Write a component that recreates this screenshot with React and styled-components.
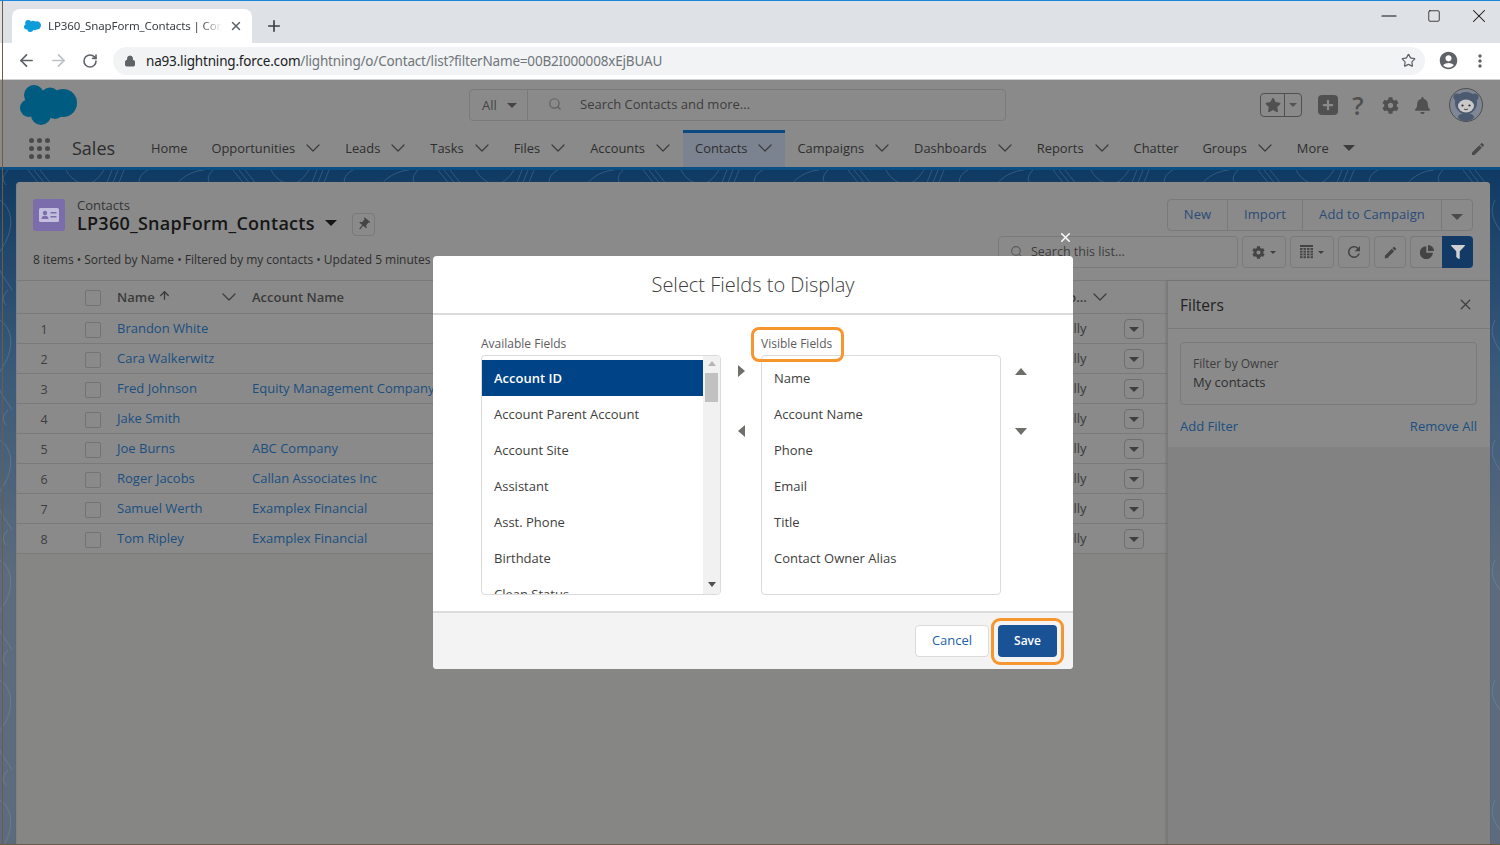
import React from "react";
import styled, { createGlobalStyle } from "styled-components";
import {
  ArrowLeft, ArrowRight, RotateCw, Star, Plus, X, Lock, Search, ChevronDown,
  ArrowUp, Minus, Square,
} from "lucide-react";
import { MdAccountCircle, MdMoreVert, MdPushPin, MdEdit, MdRefresh } from "react-icons/md";
import { FaBell, FaCog, FaFilter, FaStar, FaPlus } from "react-icons/fa";

const UI = `"Open Sans", "Noto Sans", sans-serif`;
const CHROME = `"Noto Sans", "Open Sans", sans-serif`;

const NAV = [
  { label: "Home" },
  { label: "Opportunities", menu: true },
  { label: "Leads", menu: true },
  { label: "Tasks", menu: true },
  { label: "Files", menu: true },
  { label: "Accounts", menu: true },
  { label: "Contacts", menu: true, active: true },
  { label: "Campaigns", menu: true },
  { label: "Dashboards", menu: true },
  { label: "Reports", menu: true },
  { label: "Chatter" },
  { label: "Groups", menu: true },
];

const ROWS = [
  ["Brandon White", ""],
  ["Cara Walkerwitz", ""],
  ["Fred Johnson", "Equity Management Company"],
  ["Jake Smith", ""],
  ["Joe Burns", "ABC Company"],
  ["Roger Jacobs", "Callan Associates Inc"],
  ["Samuel Werth", "Examplex Financial"],
  ["Tom Ripley", "Examplex Financial"],
];

const AVAILABLE = ["Account ID", "Account Parent Account", "Account Site", "Assistant", "Asst. Phone", "Birthdate", "Clean Status"];
const VISIBLE = ["Name", "Account Name", "Phone", "Email", "Title", "Contact Owner Alias"];

function Cloud({ width, color }) {
  return (
    <svg width={width} viewBox="0 0 57 40" fill={color} style={{ display: "block" }}>
      <circle cx="14" cy="10" r="10" />
      <circle cx="30" cy="12" r="9.5" />
      <circle cx="43" cy="18" r="14" />
      <circle cx="9" cy="23" r="9" />
      <circle cx="21" cy="30" r="10" />
      <circle cx="35" cy="25" r="9" />
      <rect x="10" y="10" width="30" height="20" />
    </svg>
  );
}

function Astro() {
  return (
    <svg width="34" height="34" viewBox="0 0 34 34" style={{ marginLeft: 5 }}>
      <circle cx="17" cy="17" r="16.5" fill="#7e8793" stroke="#4f4f4f" />
      <circle cx="8" cy="9" r="3.5" fill="#4b5a70" />
      <circle cx="26" cy="9" r="3.5" fill="#4b5a70" />
      <circle cx="17" cy="15" r="11" fill="#4b5a70" />
      <ellipse cx="17" cy="29" rx="8" ry="4" fill="#4b5a70" />
      <ellipse cx="17" cy="18" rx="8" ry="6.5" fill="#c9c9c9" />
      <circle cx="13.5" cy="17.5" r="1.1" fill="#2a2a2a" />
      <circle cx="20.5" cy="17.5" r="1.1" fill="#2a2a2a" />
      <path d="M15 21q2 1.5 4 0" stroke="#2a2a2a" fill="none" strokeWidth="0.8" />
    </svg>
  );
}

function ContactCard() {
  return (
    <svg width="20" height="14" viewBox="0 0 20 14">
      <rect width="20" height="14" rx="1.5" fill="#c3bedd" />
      <circle cx="6" cy="5" r="2.2" fill="#7b6cab" />
      <path d="M2.5 11c0-2.4 1.500-3.200 3.500-3.200s3.500.8 3.500 3.200z" fill="#7b6cab" />
      <rect x="11.500" y="4" width="6" height="1.500" fill="#7b6cab" />
      <rect x="11.500" y="8" width="6" height="1.500" fill="#7b6cab" />
    </svg>
  );
}

function GridIcon() {
  return (
    <svg width="13" height="14" viewBox="0 0 13 14" fill="#444">
      <rect width="13" height="2" />
      {[3, 5.75, 8.5, 11.25].map((y) => [0, 3.5, 7, 10.5].map((x) => (
        <rect key={`${x}-${y}`} x={x} y={y} width="2.5" height="1.9" />
      )))}
    </svg>
  );
}

function PieIcon() {
  return (
    <svg width="14" height="14" viewBox="0 0 14 14" fill="#444">
      <path d="M6.300 1.200v6.500h6.500a6.500 6.500 0 1 1-6.500-6.500z" />
      <path d="M8 0a6 6 0 0 1 6 6H8z" />
    </svg>
  );
}

function Topo() {
  return (
    <BandArt width="100%" height="100%">
      <defs>
        <pattern id="topo" width="205" height="120" patternUnits="userSpaceOnUse">
          <g fill="none" stroke="#7fa6c6" strokeOpacity="0.28" strokeWidth="1">
            <path d="M8 0c-6 6-6 10-2 15M28 0l12 15M34 0l12 15M40 0l12 15M66 0c4 8 12 14 20 14s14-8 18-14M112 0l-6 15M118 0l-6 15M124 0l-6 15M148 0c-8 4-10 10-8 15M176 15c6-8 16-14 28-15" />
            <path d="M0 30c14 10 14 30 2 48s4 30 10 42M30 20c-12 20-2 44 2 60s-8 30-6 40M150 30c30 10 40 30 30 50s-20 30-8 40M90 30c20 8 40 4 50 24s-10 40 0 66M60 30c-10 20 10 30 14 50s-6 30 0 40" />
          </g>
        </pattern>
      </defs>
      <rect width="100%" height="100%" fill="url(#topo)" />
    </BandArt>
  );
}

export default function App() {
  return (
    <Frame>
      <GlobalStyle />
      <TabBar>
        <Tab>
          <Cloud width={17} color="#0d9dda" />
          <TabTitle>LP360_SnapForm_Contacts | Contacts | Salesforce</TabTitle>
          <X size={14} color="#5f6368" strokeWidth={2.5} />
        </Tab>
        <NewTab><Plus size={18} color="#3c4043" strokeWidth={2.2} /></NewTab>
        <WindowControls>
          <WindowButton><Minus size={24} strokeWidth={1.1} /></WindowButton>
          <WindowButton><Square size={14} strokeWidth={1.3} /></WindowButton>
          <WindowButton><X size={22} strokeWidth={1.1} /></WindowButton>
        </WindowControls>
      </TabBar>

      <Toolbar>
        <ToolIcon><ArrowLeft size={19} color="#5f6368" strokeWidth={2.2} /></ToolIcon>
        <ToolIcon><ArrowRight size={19} color="#bdc1c6" strokeWidth={2.2} /></ToolIcon>
        <ToolIcon><RotateCw size={16} color="#5f6368" strokeWidth={2.4} /></ToolIcon>
        <AddressBar>
          <Lock size={12} color="#5f6368" fill="#5f6368" />
          <Url><b>na93.lightning.force.com</b>/lightning/o/Contact/list?filterName=00B2I000008xEjBUAU</Url>
          <Star size={15} color="#5f6368" strokeWidth={2} />
        </AddressBar>
        <Account><MdAccountCircle size={21} color="#5f6368" /></Account>
        <Account><MdMoreVert size={20} color="#5f6368" /></Account>
      </Toolbar>

      <GlobalHeader>
        <LogoSlot><Cloud width={57} color="#005b80" /></LogoSlot>
        <SearchBox>
          <ScopePicker>All<Caret $size={5} /></ScopePicker>
          <SearchField>
            <Search size={14} color="#5f5f5f" />
            <span>Search Contacts and more...</span>
          </SearchField>
        </SearchBox>
        <HeaderTools>
          <Favorites>
            <FavStar><FaStar size={16} /></FavStar>
            <FavMenu><Caret $size={4} $color="#555" /></FavMenu>
          </Favorites>
          <PlusTile><FaPlus size={12} color="#8a8a8a" /></PlusTile>
          <HeaderIcon><Question>?</Question></HeaderIcon>
          <HeaderIcon><FaCog size={17} /></HeaderIcon>
          <HeaderIcon><FaBell size={17} /></HeaderIcon>
          <Astro />
        </HeaderTools>
      </GlobalHeader>

      <NavBar>
        <Waffle>{Array.from({ length: 9 }).map((_, i) => <i key={i} />)}</Waffle>
        <AppName>Sales</AppName>
        {NAV.map((item) => (
          <NavItem key={item.label} $active={item.active}>
            {item.label}
            {item.menu && <Chevron />}
          </NavItem>
        ))}
        <NavItem>More<Caret $size={6} $color="#3c3c3c" $gap={4} /></NavItem>
        <NavEdit><MdEdit size={16} /></NavEdit>
      </NavBar>

      <Band>
        <Topo />
        <Card>
          <ListHeader>
            <ListTitle>
              <TitleRow>
                <ObjectIcon><ContactCard /></ObjectIcon>
                <div>
                  <ObjectName>Contacts</ObjectName>
                  <ViewName>
                    LP360_SnapForm_Contacts
                    <Caret $size={6} $color="#161616" $gap={10} />
                    <PinButton><MdPushPin size={15} /></PinButton>
                  </ViewName>
                </div>
              </TitleRow>
              <Meta>8 items • Sorted by Name • Filtered by my contacts • Updated 5 minutes ago</Meta>
            </ListTitle>
            <ListActions>
              <ButtonGroup>
                <GroupButton $width={59}>New</GroupButton>
                <GroupButton $width={75}>Import</GroupButton>
                <GroupButton $width={139}>Add to Campaign</GroupButton>
                <GroupButton $width={31}><Caret $size={6} $color="#4a4a4a" /></GroupButton>
              </ButtonGroup>
              <ListTools>
                <ListSearch>
                  <Search size={13} color="#5a5a5a" />
                  <span>Search this list...</span>
                </ListSearch>
                <ToolButton $wide><FaCog size={13} /><Caret $size={3} $color="#3f3f3f" /></ToolButton>
                <ToolButton $wide><GridIcon /><Caret $size={3} $color="#3f3f3f" /></ToolButton>
                <ToolButton><MdRefresh size={18} /></ToolButton>
                <ToolButton><MdEdit size={15} /></ToolButton>
                <ChartFilter>
                  <ToolButton $joined><PieIcon /></ToolButton>
                  <FilterButton><FaFilter size={14} color="#d0d0d0" /></FilterButton>
                </ChartFilter>
              </ListTools>
            </ListActions>
          </ListHeader>

          <ListBody>
            <Table>
              <HeadRow>
                <span />
                <CheckCell><Checkbox /></CheckCell>
                <HeadCell>
                  <span>Name <ArrowUp size={13} strokeWidth={2.4} /></span>
                  <Chevron />
                </HeadCell>
                <HeadLabel>Account Name</HeadLabel>
                <AliasHead>Co...<Chevron /></AliasHead>
                <span />
              </HeadRow>
              {ROWS.map(([name, account], i) => (
                <Row key={name}>
                  <RowNumber>{i + 1}</RowNumber>
                  <CheckCell><Checkbox /></CheckCell>
                  <RowLink>{name}</RowLink>
                  <RowLink>{account}</RowLink>
                  <Alias>sally</Alias>
                  <RowMenu><Caret $size={5} $color="#3f3f3f" /></RowMenu>
                </Row>
              ))}
            </Table>

            <FilterPanel>
              <FilterTop>
                <FilterHead>
                  Filters
                  <X size={17} strokeWidth={1.8} />
                </FilterHead>
                <FilterContent>
                  <FilterBox>
                    <small>Filter by Owner</small>
                    <span>My contacts</span>
                  </FilterBox>
                  <FilterLinks>
                    <a>Add Filter</a>
                    <a>Remove All</a>
                  </FilterLinks>
                </FilterContent>
              </FilterTop>
            </FilterPanel>
          </ListBody>
        </Card>
      </Band>

      <Modal>
        <ModalClose><X size={15} strokeWidth={2.4} color="#fff" /></ModalClose>
        <ModalHeader>Select Fields to Display</ModalHeader>
        <ModalBody>
          <FieldLabel>Available Fields</FieldLabel>
          <span />
          <FieldLabel $callout>Visible Fields</FieldLabel>
          <span />
          <FieldList>
            <Options>
              {AVAILABLE.map((f, i) => <Option key={f} $selected={i === 0}>{f}</Option>)}
            </Options>
            <Scrollbar>
              <ScrollCaret $up />
              <ScrollThumb />
              <ScrollCaret />
            </Scrollbar>
          </FieldList>
          <MoveColumn>
            <Arrow $dir="right" />
            <Arrow $dir="left" />
          </MoveColumn>
          <FieldList>
            <Options>
              {VISIBLE.map((f) => <Option key={f}>{f}</Option>)}
            </Options>
          </FieldList>
          <MoveColumn>
            <Arrow $dir="up" />
            <Arrow $dir="down" />
          </MoveColumn>
        </ModalBody>
        <ModalFooter>
          <CancelButton>Cancel</CancelButton>
          <SaveButton>Save</SaveButton>
        </ModalFooter>
      </Modal>
    </Frame>
  );
}

/* ================= STYLES ================= */
const GlobalStyle = createGlobalStyle`
  html, body { margin: 0; padding: 0; background: #8a8a8a; }
  * { box-sizing: border-box; }
`;

const Frame = styled.div`
  position: relative;
  width: 1500px;
  height: 845px;
  overflow: hidden;
  display: flex;
  flex-direction: column;
  font-family: ${UI};
  border-top: 1px solid #1a87dc;
  border-bottom: 1px solid #6a5a45;

  &::after {
    content: "";
    position: absolute;
    left: 2px;
    top: 0;
    bottom: 0;
    width: 1px;
    background: #6f5a42;
  }
`;

const TabBar = styled.div`
  height: 42px;
  flex: none;
  background: #dee1e6;
  display: flex;
  align-items: flex-end;
  padding-left: 12px;
`;

const Tab = styled.div`
  width: 240px;
  height: 34px;
  background: #fff;
  border-radius: 8px 8px 0 0;
  display: flex;
  align-items: center;
  padding: 0 9px 0 12px;
  gap: 7px;
`;

const TabTitle = styled.div`
  flex: 1;
  min-width: 0;
  padding-bottom: 2px;
  font: 11.5px ${CHROME};
  letter-spacing: -0.12px;
  color: #3c4043;
  white-space: nowrap;
  overflow: hidden;
  mask-image: linear-gradient(to right, #000 88%, transparent);
`;

const NewTab = styled.div`
  width: 44px;
  height: 34px;
  display: flex;
  align-items: center;
  justify-content: center;
`;

const WindowControls = styled.div`
  margin-left: auto;
  align-self: flex-start;
  height: 29px;
  display: flex;
  gap: 3px;
  color: #111;
`;

const WindowButton = styled.div`
  width: 42px;
  display: flex;
  align-items: center;
  justify-content: center;
`;

const Toolbar = styled.div`
  height: 37px;
  flex: none;
  background: #fff;
  display: flex;
  align-items: center;
  padding: 0 0 1px 10px;
  border-bottom: 1px solid #cfd1d4;
`;

const ToolIcon = styled.div`
  width: 32px;
  display: flex;
  justify-content: center;
`;

const AddressBar = styled.div`
  width: 1312px;
  height: 28px;
  margin-left: 7px;
  background: #f1f3f4;
  border-radius: 14px;
  display: flex;
  align-items: center;
  padding: 0 9px 0 11px;
`;

const Url = styled.div`
  flex: 1;
  margin-left: 10px;
  font: 13.5px ${CHROME};
  color: #70757a;
  letter-spacing: -0.18px;

  b {
    font-weight: 400;
    color: #202124;
  }
`;

const Account = styled.div`
  width: 32px;
  margin-left: 7px;
  display: flex;
  justify-content: center;
  &:last-child { margin-left: 0; }
`;

const GlobalHeader = styled.div`
  height: 50px;
  flex: none;
  background: #8a8a8a;
  display: flex;
  align-items: center;
`;

const LogoSlot = styled.div`
  width: 469px;
  padding-left: 20px;
`;

const SearchBox = styled.div`
  width: 537px;
  height: 32px;
  border: 1px solid #7a7a7a;
  border-radius: 4px;
  display: flex;
  font-size: 13px;
  color: #3d3d3d;
`;

const ScopePicker = styled.div`
  width: 58px;
  border-right: 1px solid #7a7a7a;
  display: flex;
  align-items: center;
  justify-content: space-between;
  padding: 0 10px 0 12px;
  color: #444;
`;

const SearchField = styled.div`
  flex: 1;
  display: flex;
  align-items: center;
  gap: 18px;
  padding: 0 0 2px 20px;
`;

const Caret = styled.i`
  display: inline-block;
  width: 0;
  height: 0;
  margin-left: ${(p) => p.$gap || 0}px;
  border-left: ${(p) => p.$size}px solid transparent;
  border-right: ${(p) => p.$size}px solid transparent;
  border-top: ${(p) => p.$size}px solid ${(p) => p.$color || "#444"};
`;

const Chevron = styled(ChevronDown).attrs({ size: 24, strokeWidth: 1.2 })`
  flex: none;
  margin: 0 -4px;
  color: #3c3c3c;
`;

const HeaderTools = styled.div`
  margin-left: auto;
  padding-right: 17px;
  display: flex;
  align-items: center;
  color: #505050;
`;

const Favorites = styled.div`
  width: 42px;
  height: 24px;
  border: 1px solid #505050;
  border-radius: 4px;
  display: flex;
  margin-right: 16px;
`;

const FavStar = styled.div`
  width: 24px;
  border-right: 1px solid #505050;
  display: flex;
  align-items: center;
  justify-content: center;
`;

const FavMenu = styled.div`
  flex: 1;
  display: flex;
  align-items: center;
  justify-content: center;
`;

const PlusTile = styled.div`
  width: 20px;
  height: 20px;
  background: #505050;
  border-radius: 4px;
  display: flex;
  align-items: center;
  justify-content: center;
  margin-right: 10px;
`;

const HeaderIcon = styled.div`
  width: 20px;
  margin-right: 12px;
  display: flex;
  justify-content: center;
`;

const Question = styled.span`
  font: 600 25px/20px ${UI};
  color: #505050;
`;

const NavBar = styled.div`
  height: 37px;
  flex: none;
  background: #8a8a8a;
  display: flex;
  align-items: stretch;
  padding-left: 29px;
`;

const Waffle = styled.div`
  width: 21px;
  height: 21px;
  align-self: center;
  display: grid;
  grid-template-columns: repeat(3, 5px);
  justify-content: space-between;
  align-content: space-between;

  i {
    width: 5px;
    height: 5px;
    border-radius: 50%;
    background: #4a4a4a;
  }
`;

const AppName = styled.div`
  width: 67px;
  margin-left: 22px;
  font-size: 18px;
  line-height: 37px;
  color: #2c2c2c;
`;

const NavItem = styled.div`
  display: flex;
  align-items: center;
  gap: 10px;
  padding: 0 12px 2px;
  font-size: 12.9px;
  color: #2e2e2e;
  white-space: nowrap;
  background: ${(p) => (p.$active ? "#7b8290" : "transparent")};
  box-shadow: ${(p) => (p.$active ? "inset 0 3px 0 #0b4a80" : "none")};
`;

const NavEdit = styled.div`
  margin-left: auto;
  padding-right: 14px;
  display: flex;
  align-items: center;
  color: #4a4a4a;
`;

const Band = styled.div`
  flex: 1;
  position: relative;
  min-height: 0;
  padding: 12px 10px 0 16px;
  border-top: 3px solid #0b4f85;
  background: linear-gradient(#0f3a63, #3a5a7a 30%, #5c6b7d 60%);
`;

const BandArt = styled.svg`
  position: absolute;
  inset: 0;
`;

const Card = styled.div`
  position: relative;
  height: 700px;
  background: #868684;
  border-radius: 4px 4px 0 0;
  border-left: 1px solid #808080;
  box-shadow: 0 0 1px #555;
`;

const ListHeader = styled.div`
  height: 99px;
  background: #8a8a8a;
  border-radius: 4px 4px 0 0;
  border-bottom: 1px solid #7a7a7a;
  padding: 17px 17px 0 16px;
  display: flex;
  justify-content: space-between;
`;

const ListTitle = styled.div`
  min-width: 0;
`;

const TitleRow = styled.div`
  display: flex;
  gap: 12px;
`;

const ObjectIcon = styled.div`
  width: 32px;
  height: 32px;
  background: #7b6cab;
  border-radius: 3px;
  display: flex;
  align-items: center;
  justify-content: center;
`;

const ObjectName = styled.div`
  font-size: 13px;
  line-height: 13px;
  color: #353535;
`;

const ViewName = styled.div`
  display: flex;
  align-items: center;
  height: 22px;
  font-size: 18px;
  font-weight: 600;
  letter-spacing: 0.26px;
  line-height: 22px;
  color: #161616;
  white-space: nowrap;
`;

const PinButton = styled.span`
  flex: none;
  width: 23px;
  height: 23px;
  margin-left: 15px;
  margin-top: 2px;
  border: 1px solid #7a7a7a;
  border-radius: 4px;
  display: inline-flex;
  align-items: center;
  justify-content: center;
  color: #444;
  svg { transform: rotate(40deg); }
`;

const Meta = styled.div`
  margin-top: 18px;
  font-size: 12px;
  letter-spacing: -0.03px;
  line-height: 16px;
  color: #2e2e2e;
  white-space: nowrap;
`;

const ListActions = styled.div`
  display: flex;
  flex-direction: column;
  align-items: flex-end;
  gap: 5px;
`;

const ButtonGroup = styled.div`
  display: flex;
  height: 32px;
  border: 1px solid #7a7a7a;
  border-radius: 4px;
`;

const GroupButton = styled.div`
  width: ${(p) => p.$width}px;
  padding-bottom: 2px;
  display: flex;
  align-items: center;
  justify-content: center;
  font-size: 13px;
  letter-spacing: 0.1px;
  color: #2c4a78;
  border-left: 1px solid #7a7a7a;
  &:first-child { border-left: none; }
  i { margin-top: 6px; }
`;

const ListTools = styled.div`
  display: flex;
  gap: 4px;
  height: 32px;
`;

const ListSearch = styled.div`
  width: 240px;
  padding: 0 0 2px 11px;
  border: 1px solid #7a7a7a;
  border-radius: 4px;
  display: flex;
  align-items: center;
  gap: 8px;
  font-size: 12.5px;
  color: #3c3c3c;
`;

const ToolButton = styled.div`
  width: ${(p) => (p.$wide ? 44 : 32)}px;
  border: 1px solid #7a7a7a;
  border-radius: ${(p) => (p.$joined ? "4px 0 0 4px" : "4px")};
  border-right: ${(p) => (p.$joined ? "none" : "1px solid #7a7a7a")};
  display: flex;
  align-items: center;
  justify-content: center;
  gap: 5px;
  color: #444;
`;

const ChartFilter = styled.div`
  display: flex;
`;

const FilterButton = styled.div`
  width: 31px;
  background: #133a66;
  border-radius: 0 4px 4px 0;
  display: flex;
  align-items: center;
  justify-content: center;
`;

const ListBody = styled.div`
  display: flex;
  height: 600px;
`;

const Table = styled.div`
  width: 1150px;
  flex: none;
`;

const ROW_COLUMNS = "54px 46px 135px 808px 64px 1fr";

const HeadRow = styled.div`
  display: grid;
  grid-template-columns: ${ROW_COLUMNS};
  height: 33px;
  align-items: center;
  background: #8a8a8a;
  border-bottom: 1px solid #7a7a7a;
`;

const HeadCell = styled.div`
  display: flex;
  align-items: center;
  justify-content: space-between;
  padding-right: 15px;
  font-size: 13px;
  font-weight: 600;
  color: #3a3a3a;
  span svg { vertical-align: 0; }
`;

const HeadLabel = styled.div`
  font-size: 13px;
  font-weight: 600;
  color: #3a3a3a;
`;

const AliasHead = styled(HeadLabel)`
  display: flex;
  align-items: center;
  gap: 5px;
  white-space: nowrap;
`;

const Row = styled.div`
  display: grid;
  grid-template-columns: ${ROW_COLUMNS};
  height: 30px;
  align-items: center;
  background: #8a8a8a;
  border-bottom: 1px solid #7a7a7a;
`;

const RowNumber = styled.div`
  text-align: center;
  font-size: 12.5px;
  color: #3e3e3e;
  padding-top: 2px;
`;

const CheckCell = styled.div`
  padding: 2px 0 0 14px;
  display: flex;
`;

const Checkbox = styled.i`
  width: 16px;
  height: 16px;
  border: 1px solid #737373;
  border-radius: 2px;
`;

const RowLink = styled.a`
  padding-bottom: 2px;
  font-size: 13px;
  color: #1a4f80;
  white-space: nowrap;
`;

const Alias = styled.div`
  padding-bottom: 2px;
  font-size: 13px;
  color: #3a3a3a;
`;

const RowMenu = styled.div`
  width: 20px;
  height: 20px;
  margin-top: 1px;
  border: 1px solid #6f6f6f;
  border-radius: 4px;
  display: flex;
  align-items: center;
  justify-content: center;
`;

const FilterPanel = styled.div`
  flex: 1;
  background: #828282;
  border-left: 1px solid #7a7a7a;
  box-shadow: -1px 0 2px rgba(0, 0, 0, 0.15);
`;

const FilterTop = styled.div`
  background: #8a8a8a;
  height: 166px;
`;

const FilterHead = styled.div`
  height: 48px;
  border-bottom: 1px solid #7a7a7a;
  display: flex;
  align-items: center;
  justify-content: space-between;
  padding: 0 16px 0 12px;
  font-size: 15.5px;
  color: #222;
  svg { color: #3f3f3f; }
`;

const FilterContent = styled.div`
  padding: 13px 13px 0 12px;
`;

const FilterBox = styled.div`
  height: 63px;
  border: 1px solid #7a7a7a;
  border-radius: 4px;
  padding: 13px 12px 0;
  display: flex;
  flex-direction: column;
  gap: 2px;
  font-size: 13px;
  line-height: 16px;
  color: #2e2e2e;

  small {
    font-size: 12px;
    color: #3d3d3d;
  }
`;

const FilterLinks = styled.div`
  display: flex;
  justify-content: space-between;
  margin-top: 12px;
  font-size: 13px;
  color: #1a4f80;
`;

const Modal = styled.div`
  position: absolute;
  left: 433px;
  top: 255px;
  width: 640px;
  height: 413px;
  background: #fff;
  border-radius: 4px;
  display: flex;
  flex-direction: column;
  z-index: 2;
`;

const ModalClose = styled.div`
  position: absolute;
  right: 0;
  top: -26px;
  display: flex;
`;

const ModalHeader = styled.div`
  height: 59px;
  flex: none;
  border-bottom: 2px solid #dbdbdb;
  display: flex;
  align-items: center;
  justify-content: center;
  font-size: 20px;
  font-weight: 300;
  color: #3e3e3c;
`;

const ModalBody = styled.div`
  flex: 1;
  padding: 19px 0 0 48px;
  display: grid;
  grid-template-columns: 240px 40px 240px 40px;
  grid-template-rows: 21px 240px;
`;

const FieldLabel = styled.div`
  position: relative;
  align-self: start;
  justify-self: start;
  font-size: 12px;
  line-height: 20px;
  color: #5c5c5c;

  ${(p) =>
    p.$callout &&
    `
    &::after {
      content: "";
      position: absolute;
      inset: -7px -12px -8px -10px;
      border: 3px solid #f7952f;
      border-radius: 8px;
    }
  `}
`;

const FieldList = styled.div`
  height: 240px;
  border: 1px solid #dddbda;
  border-radius: 4px;
  overflow: hidden;
  display: flex;
  background: #fff;
`;

const Options = styled.div`
  flex: 1;
  min-width: 0;
  padding-top: 4px;
`;

const Option = styled.div`
  height: 36px;
  padding-left: 12px;
  display: flex;
  align-items: center;
  font-size: 13px;
  color: ${(p) => (p.$selected ? "#fff" : "#3e3e3c")};
  background: ${(p) => (p.$selected ? "#004487" : "transparent")};
  font-weight: ${(p) => (p.$selected ? 600 : 400)};
  white-space: nowrap;
`;

const Scrollbar = styled.div`
  width: 17px;
  flex: none;
  background: #f1f1f1;
  display: flex;
  flex-direction: column;
  align-items: center;
  padding: 5px 0;
`;

const ScrollCaret = styled.i`
  width: 0;
  height: 0;
  border-left: 4px solid transparent;
  border-right: 4px solid transparent;
  border-bottom: ${(p) => (p.$up ? "5px solid #b5b5b5" : "none")};
  border-top: ${(p) => (p.$up ? "none" : "5px solid #505050")};
  &:last-child { margin-top: auto; margin-bottom: 2px; }
`;

const ScrollThumb = styled.div`
  width: 13px;
  height: 29px;
  margin-top: 7px;
  background: #c1c1c1;
`;

const ARROWS = {
  right: "border-top: 6px solid transparent; border-bottom: 6px solid transparent; border-left: 7px solid #706e6b;",
  left: "border-top: 6px solid transparent; border-bottom: 6px solid transparent; border-right: 7px solid #706e6b;",
  up: "border-left: 6px solid transparent; border-right: 6px solid transparent; border-bottom: 7px solid #706e6b;",
  down: "border-left: 6px solid transparent; border-right: 6px solid transparent; border-top: 7px solid #706e6b;",
};

const MoveColumn = styled.div`
  display: grid;
  grid-auto-rows: 16px;
  row-gap: 44px;
  align-content: start;
  justify-items: center;
  align-items: center;
  padding-top: 8px;
`;

const Arrow = styled.i`
  width: 0;
  height: 0;
  ${(p) => ARROWS[p.$dir]}
`;

const ModalFooter = styled.div`
  height: 58px;
  flex: none;
  background: #f3f3f3;
  border-top: 2px solid #dddbda;
  border-radius: 0 0 4px 4px;
  display: flex;
  align-items: center;
  justify-content: flex-end;
  gap: 9px;
  padding-right: 16px;
`;

const CancelButton = styled.div`
  width: 74px;
  height: 32px;
  padding-bottom: 2px;
  background: #fff;
  border: 1px solid #dddbda;
  border-radius: 4px;
  display: flex;
  align-items: center;
  justify-content: center;
  font-size: 13px;
  color: #1f5fa8;
`;

const SaveButton = styled.div`
  position: relative;
  width: 59px;
  height: 32px;
  padding-bottom: 1px;
  background: #1a5296;
  border-radius: 4px;
  display: flex;
  align-items: center;
  justify-content: center;
  font-size: 12px;
  font-weight: 600;
  color: #fff;

  &::after {
    content: "";
    position: absolute;
    inset: -7px -7px -8px -7px;
    border: 3px solid #f7952f;
    border-radius: 9px;
  }
`;
